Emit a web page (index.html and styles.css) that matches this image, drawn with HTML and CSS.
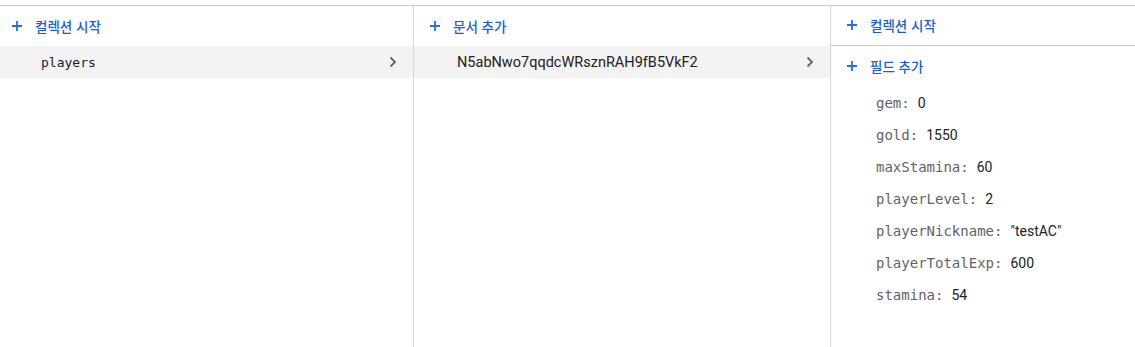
FILE: index.html
```html
<!DOCTYPE html>
<html lang="ko">
<head>
<meta charset="utf-8">
<link rel="stylesheet" href="styles.css">
</head>
<body>
<div class="panels">
  <section class="col col-a">
    <div class="action"><svg class="plus" viewBox="0 0 10 10"><path d="M5 0V10M0 5H10"/></svg><span>컬렉션 시작</span></div>
    <div class="item"><span class="mono">players</span><svg class="chev" viewBox="0 0 8 12"><path d="M1.5 1.5L6 6L1.5 10.5"/></svg></div>
  </section>
  <section class="col col-b">
    <div class="action"><svg class="plus" viewBox="0 0 10 10"><path d="M5 0V10M0 5H10"/></svg><span>문서 추가</span></div>
    <div class="item"><span class="docid">N5abNwo7qqdcWRsznRAH9fB5VkF2</span><svg class="chev" viewBox="0 0 8 12"><path d="M1.5 1.5L6 6L1.5 10.5"/></svg></div>
  </section>
  <section class="col col-c">
    <div class="action bordered"><svg class="plus" viewBox="0 0 10 10"><path d="M5 0V10M0 5H10"/></svg><span>컬렉션 시작</span></div>
    <div class="action"><svg class="plus" viewBox="0 0 10 10"><path d="M5 0V10M0 5H10"/></svg><span>필드 추가</span></div>
    <ul class="fields">
      <li><span class="key">gem:</span><span class="val">0</span></li>
      <li><span class="key">gold:</span><span class="val">1550</span></li>
      <li><span class="key">maxStamina:</span><span class="val">60</span></li>
      <li><span class="key">playerLevel:</span><span class="val">2</span></li>
      <li><span class="key">playerNickname:</span><span class="val">"testAC"</span></li>
      <li><span class="key">playerTotalExp:</span><span class="val">600</span></li>
      <li><span class="key">stamina:</span><span class="val">54</span></li>
    </ul>
  </section>
</div>
</body>
</html>
```
FILE: styles.css
```css
* { box-sizing: border-box; }
html, body { margin: 0; padding: 0; background: #fff; }
body {
  font-family: Roboto, "Noto Sans CJK KR", sans-serif;
  color: #202124;
  padding-top: 5px;
}
.panels {
  display: grid;
  grid-template-columns: 414px 417px 1fr;
  border-top: 1px solid #c9ccd3;
  height: 342px;
}
.col { min-width: 0; }
.col-a, .col-b { border-right: 1px solid #d5d7dc; }
.action {
  height: 40px;
  display: flex;
  align-items: center;
  color: #1a5fd0;
  font-size: 13.5px;
  font-weight: 500;
  padding-bottom: 1px;
}
.action span { font-family: "Noto Sans CJK KR", sans-serif; }
.col-a .action { padding-left: 12px; }
.col-b .action { padding-left: 16px; }
.col-c .action { padding-left: 16px; }
.plus {
  width: 10px; height: 10px;
  stroke: #1a73e8; stroke-width: 1.8; fill: none;
  margin-right: 13px;
}
.col-c .action + .action { height: 41px; }
.bordered { border-bottom: 1px solid #c9ccd3; }
.item {
  height: 32px;
  background: #f3f3f3;
  display: flex;
  align-items: center;
  justify-content: space-between;
  font-size: 13px;
}
.col-a .item { padding: 0 16px 0 41px; }
.col-b .item { padding: 0 16px 0 43px; }
.mono { font-family: "DejaVu Sans Mono", monospace; color: #202124; }
.docid { font-family: Roboto, sans-serif; font-size: 14.5px; color: #202124; }
.chev { width: 8px; height: 12px; stroke: #5f6368; stroke-width: 1.8; fill: none; }
.fields {
  list-style: none;
  margin: 0;
  padding: 0 0 0 45px;
}
.fields li {
  height: 32px;
  display: flex;
  align-items: center;
}
.key { font-family: "DejaVu Sans Mono", monospace; color: #5f6368; font-size: 14px; }
.val { font-family: Roboto, sans-serif; color: #202124; font-size: 14px; margin-left: 8px; }
```
